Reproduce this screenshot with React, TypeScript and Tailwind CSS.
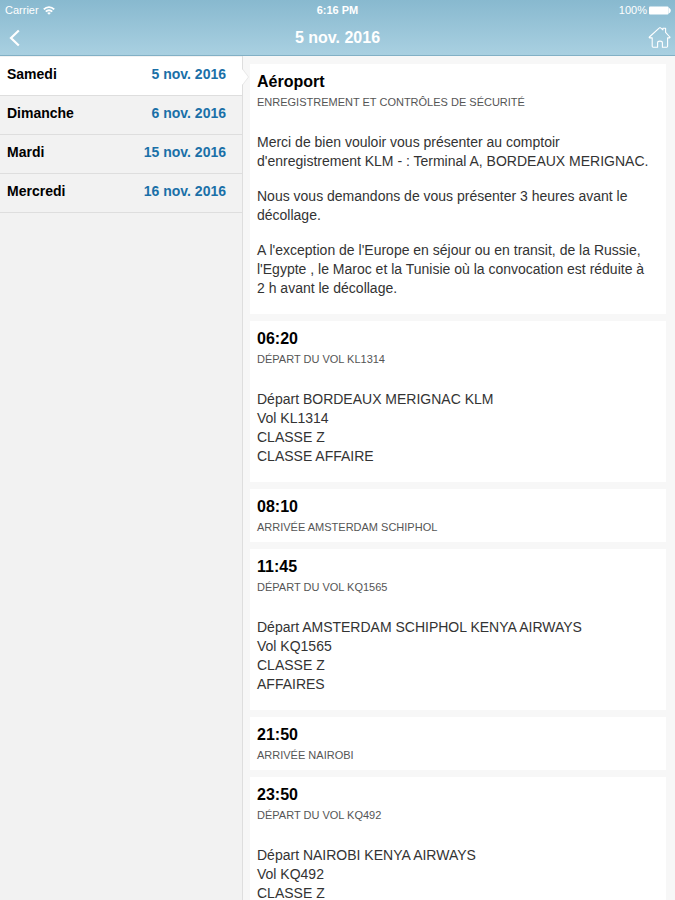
import { Fragment } from "react";

type TDay = { name: string; date: string };
type TStep = { title: string; subtitle: string; paragraphs?: string[][] };

const days: TDay[] = [
    { name: "Samedi", date: "5 nov. 2016" },
    { name: "Dimanche", date: "6 nov. 2016" },
    { name: "Mardi", date: "15 nov. 2016" },
    { name: "Mercredi", date: "16 nov. 2016" },
];

const steps: TStep[] = [
    {
        title: "Aéroport",
        subtitle: "ENREGISTREMENT ET CONTRÔLES DE SÉCURITÉ",
        paragraphs: [
            ["Merci de bien vouloir vous présenter au comptoir", "d'enregistrement KLM - : Terminal A, BORDEAUX MERIGNAC."],
            ["Nous vous demandons de vous présenter 3 heures avant le", "décollage."],
            ["A l'exception de l'Europe en séjour ou en transit, de la Russie,", "l'Egypte , le Maroc et la Tunisie où la convocation est réduite à", "2 h avant le décollage."],
        ],
    },
    {
        title: "06:20",
        subtitle: "DÉPART DU VOL KL1314",
        paragraphs: [["Départ BORDEAUX MERIGNAC KLM", "Vol KL1314", "CLASSE Z", "CLASSE AFFAIRE"]],
    },
    { title: "08:10", subtitle: "ARRIVÉE AMSTERDAM SCHIPHOL" },
    {
        title: "11:45",
        subtitle: "DÉPART DU VOL KQ1565",
        paragraphs: [["Départ AMSTERDAM SCHIPHOL KENYA AIRWAYS", "Vol KQ1565", "CLASSE Z", "AFFAIRES"]],
    },
    { title: "21:50", subtitle: "ARRIVÉE NAIROBI" },
    {
        title: "23:50",
        subtitle: "DÉPART DU VOL KQ492",
        paragraphs: [["Départ NAIROBI KENYA AIRWAYS", "Vol KQ492", "CLASSE Z"]],
    },
];

const StatusBar = () => {
    return (
        <div className="grid grid-cols-3 items-center h-5 px-1 text-[11px] leading-5">
            <div className="flex items-center gap-1 pl-px">
                <span>Carrier</span>
                <svg viewBox="0 0 12 9" className="w-3 h-[9px]" fill="none" stroke="currentColor" strokeWidth="1.9">
                    <path d="M0.8 3.4C3.8 0.4 8.2 0.4 11.2 3.4" />
                    <path d="M2.8 5.6C4.6 3.8 7.4 3.8 9.2 5.6" />
                    <path d="M6 8.8L4.2 6.9C5.2 6 6.8 6 7.8 6.9Z" fill="currentColor" stroke="none" />
                </svg>
            </div>
            <span className="text-center font-bold">6:16 PM</span>
            <div className="flex items-center justify-end gap-[2px]">
                <span>100%</span>
                <svg viewBox="0 0 22 9" className="w-[22px] h-[9px]" fill="currentColor">
                    <rect x="0" y="0.5" width="19.5" height="8" rx="1" />
                    <path d="M19.5 1.4C21.2 2.2 21.8 3.4 21.8 4.5S21.2 6.8 19.5 7.6Z" />
                </svg>
            </div>
        </div>
    );
};

const Header = () => {
    return (
        <header className="h-14 shrink-0 text-white bg-linear-to-b from-[#88b9cf] to-[#a9d0e1] border-b border-[#82b0c5]">
            <StatusBar />
            <div className="grid grid-cols-3 items-center h-9">
                <button aria-label="Retour" className="justify-self-start pl-2">
                    <svg viewBox="0 0 12 18" className="w-3 h-[18px]" fill="none" stroke="currentColor" strokeWidth="2.2">
                        <path d="M10.8 1.5L3 9L10.8 16.5" />
                    </svg>
                </button>
                <h1 className="text-center text-base font-bold">5 nov. 2016</h1>
                <button aria-label="Accueil" className="justify-self-end pr-1">
                    <svg viewBox="0 0 24 24" className="size-6" fill="none" stroke="currentColor" strokeWidth="1.1" strokeLinejoin="round">
                        <path d="M5.2 11.9H2.8C2.2 11.9 2 11.4 2.4 11L12.4 1.8C12.8 1.4 13.2 1.4 13.6 1.8L15.9 3.8V2.3H18.6V6.4L22.8 11C23.2 11.4 23 11.9 22.4 11.9H20.6V20.3C20.6 20.9 20.3 21.2 19.7 21.2H15.4V16.8C15.4 14.6 10.6 14.6 10.6 16.8V21.2H6.1C5.5 21.2 5.2 20.9 5.2 20.3Z" />
                    </svg>
                </button>
            </div>
        </header>
    );
};

const DayRow = ({ day, active }: { day: TDay; active: boolean }) => {
    return (
        <li className={active ? "relative bg-white border-b border-[#dedede]" : "border-b border-[#dedede]"}>
            <button className="flex items-center justify-between w-full h-[38px] pl-[7px] pr-4 pb-1 text-sm font-bold">
                <span>{day.name}</span>
                <span className="text-[#1a70a8]">{day.date}</span>
            </button>
            {active && (
                <svg viewBox="0 0 7 16" className="absolute top-3 left-full w-[7px] h-4">
                    <path d="M0 0L6.5 8L0 16Z" fill="#fff" />
                    <path d="M0.5 0L6.5 8L0.5 16" fill="none" stroke="#e4e4e4" strokeWidth="0.8" />
                </svg>
            )}
        </li>
    );
};

const StepCard = ({ step }: { step: TStep }) => {
    return (
        <article className="bg-white px-[7px] pt-2 pb-[7px]">
            <h2 className="text-base leading-5 font-bold">{step.title}</h2>
            <p className="mt-[2px] text-[11px] leading-4 text-[#555]">{step.subtitle}</p>
            {step.paragraphs && (
                <div className="flex flex-col gap-4 mt-[23px] pb-[9px] text-sm leading-[19px] text-[#333]">
                    {step.paragraphs.map((lines, i) => (
                        <p key={i}>
                            {lines.map((line) => (
                                <Fragment key={line}>{line}<br /></Fragment>
                            ))}
                        </p>
                    ))}
                </div>
            )}
        </article>
    );
};

const App = () => {
    return (
        <div className="flex flex-col h-screen overflow-hidden bg-[#f7f7f7] text-black font-['Liberation_Sans',Arial,sans-serif]">
            <Header />
            <div className="flex flex-1 min-h-0">
                <nav className="w-[36%] shrink-0 bg-[#f2f2f2] border-r border-[#dedede]">
                    <ul className="pt-px">
                        {days.map((day, i) => (
                            <DayRow key={day.date} day={day} active={i === 0} />
                        ))}
                    </ul>
                </nav>
                <main className="flex flex-col flex-1 gap-[7px] pt-2 pl-[7px] pr-[9px] overflow-hidden">
                    {steps.map((step) => (
                        <StepCard key={step.title} step={step} />
                    ))}
                </main>
            </div>
        </div>
    );
};

export default App;
